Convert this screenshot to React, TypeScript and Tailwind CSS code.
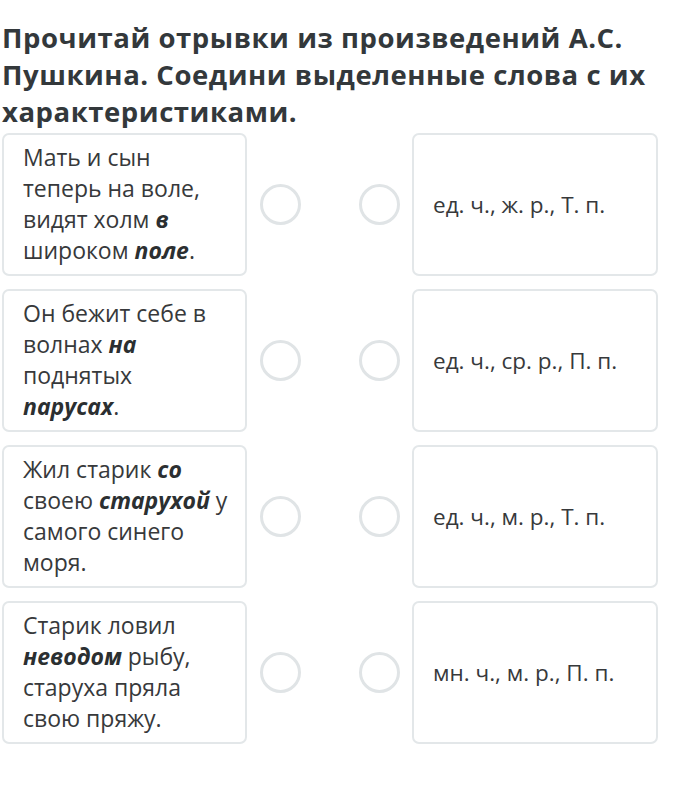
import React from 'react'

type Part = { t: string; b?: boolean }

const rows: { left: Part[]; right: string }[] = [
  {
    left: [{ t: 'Мать и сын теперь на воле, видят холм ' }, { t: 'в', b: true }, { t: ' широком ' }, { t: 'поле', b: true }, { t: '.' }],
    right: 'ед. ч., ж. р., Т. п.',
  },
  {
    left: [{ t: 'Он бежит себе в волнах ' }, { t: 'на', b: true }, { t: ' поднятых ' }, { t: 'парусах', b: true }, { t: '.' }],
    right: 'ед. ч., ср. р., П. п.',
  },
  {
    left: [{ t: 'Жил старик ' }, { t: 'со', b: true }, { t: ' своею ' }, { t: 'старухой', b: true }, { t: ' у самого синего моря.' }],
    right: 'ед. ч., м. р., Т. п.',
  },
  {
    left: [{ t: 'Старик ловил ' }, { t: 'неводом', b: true }, { t: ' рыбу, старуха пряла свою пряжу.' }],
    right: 'мн. ч., м. р., П. п.',
  },
]

const Circle = () => (
  <div className="w-[41px] h-[41px] rounded-full border-[3px] border-[#e0e4e6] bg-white" />
)

export default function App() {
  return (
    <div className="w-[689px] h-[792px] bg-white text-[#37393b]" style={{ fontFamily: '"Open Sans", "Noto Sans", sans-serif' }}>
      <h1 className="pl-[2px] pt-[19px] pr-4 text-[27.5px] leading-[37px] tracking-[0.55px] font-bold text-[#33383b]">
        Прочитай отрывки из произведений А.С. Пушкина. Соедини выделенные слова с их характеристиками.
      </h1>
      <div className="mt-[3px] pl-[2px] flex flex-col gap-[13px]">
        {rows.map((r, i) => (
          <div key={i} className="flex items-center">
            <div className="w-[245px] h-[143px] rounded-[7px] border-2 border-[#e3e7e9] pl-[19px] pt-[7px]">
              <p className="w-[205px] text-[23px] leading-[31px]">
                {r.left.map((p, j) =>
                  p.b ? (
                    <b key={j} className="italic font-bold text-[#2b2f31]">{p.t}</b>
                  ) : (
                    <span key={j}>{p.t}</span>
                  )
                )}
              </p>
            </div>
            <div className="ml-[13px]"><Circle /></div>
            <div className="ml-[58px]"><Circle /></div>
            <div className="ml-[12px] w-[246px] h-[143px] rounded-[7px] border-2 border-[#e3e7e9] pl-[19px] flex items-center text-[22.5px]">
              {r.right}
            </div>
          </div>
        ))}
      </div>
    </div>
  )
}
